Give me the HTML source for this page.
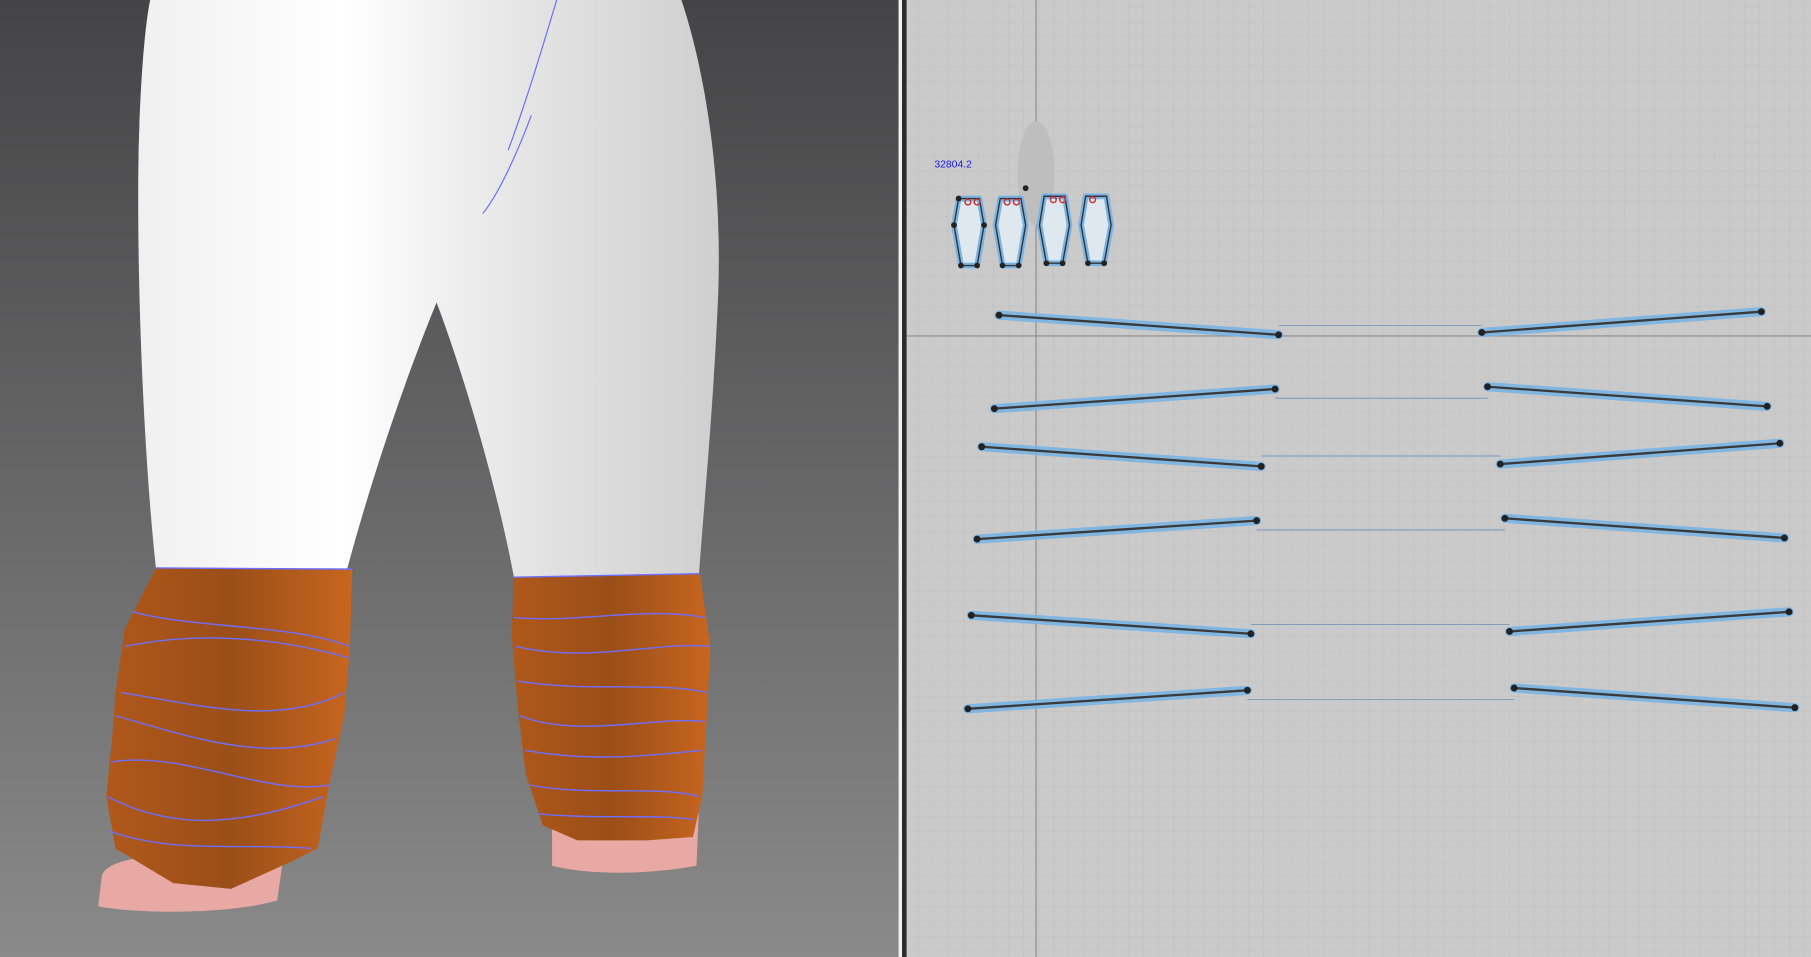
<!DOCTYPE html>
<html><head><meta charset="utf-8"><style>html,body{margin:0;padding:0;overflow:hidden;background:#888}svg{display:block}</style></head><body>
<svg width="1811" height="957" viewBox="0 0 1568 829" preserveAspectRatio="none" xmlns="http://www.w3.org/2000/svg">
<defs>
<linearGradient id="bg" x1="0" y1="0" x2="0" y2="1"><stop offset="0" stop-color="#444446"/><stop offset="0.5" stop-color="#666667"/><stop offset="1" stop-color="#8a8a8a"/></linearGradient>
<linearGradient id="pant" x1="0" y1="0" x2="1" y2="0"><stop offset="0" stop-color="#f0f0f0"/><stop offset="0.35" stop-color="#ffffff"/><stop offset="0.7" stop-color="#e2e2e2"/><stop offset="1" stop-color="#cfcfcf"/></linearGradient>
<linearGradient id="or" x1="0" y1="0" x2="1" y2="0"><stop offset="0" stop-color="#b0581a"/><stop offset="0.5" stop-color="#9a4e18"/><stop offset="1" stop-color="#c8661f"/></linearGradient>
<pattern id="g" width="13" height="13" patternUnits="userSpaceOnUse" x="2" y="5"><rect width="13" height="13" fill="#cacaca"/><path d="M0 0H13M0 0V13" stroke="#bdbdbd" stroke-width="0.7"/></pattern>
</defs>
<rect x="0" y="0" width="778" height="829" fill="url(#bg)"/>
<path d="M130,0 L590,0 C610,60 625,150 622,250 C618,350 610,430 605,500 L445,500 C430,420 400,320 378,262 C350,330 320,420 300,495 L135,492 C125,400 118,250 120,130 C122,60 126,20 130,0Z" fill="url(#pant)"/>
<path d="M482,0 C470,40 455,90 440,130 M460,100 C445,140 430,170 418,185" stroke="#6a6aff" stroke-width="1" fill="none"/>
<path d="M88,760 C90,740 160,735 245,745 L240,780 C200,792 120,792 85,785Z" fill="#e8a9a4"/>
<path d="M478,705 L605,705 L603,750 C560,758 510,758 478,750Z" fill="#e8a9a4"/>
<path d="M135,492 L305,493 L303,560 L298,620 L285,680 L275,735 L255,745 L200,770 L150,765 L100,735 L92,690 L97,640 L100,600 L108,545Z" fill="url(#or)"/>
<path d="M445,500 L606,497 L615,560 L612,620 L608,690 L600,725 L560,728 L500,728 L470,715 L455,670 L448,610 L443,550Z" fill="url(#or)"/>
<g stroke="#6e6eff" stroke-width="1.2" fill="none">
<path d="M135,492 L305,493 M115,530 C170,545 250,540 303,560 M108,560 C180,545 250,555 302,570 M105,600 C170,610 240,630 298,600 M100,620 C170,640 230,660 290,640 M96,660 C160,650 230,690 285,680 M93,690 C150,720 210,715 280,690 M95,720 C150,740 210,730 270,735"/>
<path d="M445,500 L606,497 M445,535 C500,540 560,525 610,535 M447,560 C510,575 570,555 615,560 M448,590 C510,600 570,590 612,600 M450,620 C500,640 570,620 610,625 M455,650 C510,660 560,655 608,650 M458,680 C510,690 570,680 605,690 M465,705 C520,710 570,705 600,710"/>
</g>
<rect x="778" y="0" width="3" height="829" fill="#f0f0f0"/>
<rect x="781" y="0" width="4" height="829" fill="#2a2a2a"/>
<rect x="785" y="0" width="783" height="829" fill="url(#g)"/>
<path d="M897,0V829M785,291H1568" stroke="#8c8c8c" stroke-width="1"/>
<text x="809" y="145" font-family="Liberation Sans, sans-serif" font-size="9" fill="#1a1ae0">32804.2</text>
<ellipse cx="897" cy="150" rx="16" ry="45" fill="#bebebe"/>
<g fill="#dfe7ef" stroke="#7ab4e4" stroke-width="5" stroke-linejoin="round">
<path d="M830,172 L848,172 L852,195 L846,230 L832,230 L826,195Z"/>
<path d="M866,172 L884,172 L888,195 L882,230 L868,230 L862,195Z"/>
<path d="M904,170 L922,170 L926,195 L920,228 L906,228 L900,195Z"/>
<path d="M940,170 L958,170 L962,195 L956,228 L942,228 L936,195Z"/>
</g>
<g stroke="#333" stroke-width="1.2" fill="none">
<path d="M830,172 L848,172 L852,195 L846,230 L832,230 L826,195Z M866,172 L884,172 L888,195 L882,230 L868,230 L862,195Z M904,170 L922,170 L926,195 L920,228 L906,228 L900,195Z M940,170 L958,170 L962,195 L956,228 L942,228 L936,195Z"/>
</g>
<g fill="#222"><circle cx="830" cy="172" r="2.5"/><circle cx="826" cy="195" r="2.5"/><circle cx="832" cy="230" r="2.5"/><circle cx="846" cy="230" r="2.5"/><circle cx="852" cy="195" r="2.5"/><circle cx="868" cy="230" r="2.5"/><circle cx="882" cy="230" r="2.5"/><circle cx="906" cy="228" r="2.5"/><circle cx="920" cy="228" r="2.5"/><circle cx="942" cy="228" r="2.5"/><circle cx="956" cy="228" r="2.5"/><circle cx="888" cy="163" r="2.5"/></g>
<g fill="none" stroke="#cc3333" stroke-width="1.3"><circle cx="838" cy="175" r="2.5"/><circle cx="846" cy="175" r="2.5"/><circle cx="872" cy="175" r="2.5"/><circle cx="880" cy="175" r="2.5"/><circle cx="912" cy="173" r="2.5"/><circle cx="920" cy="173" r="2.5"/><circle cx="946" cy="173" r="2.5"/></g>
<g stroke="#7ab4e4" stroke-width="8" stroke-linecap="round" opacity="0.9">
<path d="M865,273L1107,290M1283,288L1525,270M861,354L1104,337M1288,335L1530,352M850,387L1092,404M1299,402L1541,384M846,467L1088,451M1303,449L1545,466M841,533L1083,549M1307,547L1549,530M838,614L1080,598M1311,596L1554,613"/>
</g>
<g stroke="#3a3a3a" stroke-width="2">
<path d="M865,273L1107,290M1283,288L1525,270M861,354L1104,337M1288,335L1530,352M850,387L1092,404M1299,402L1541,384M846,467L1088,451M1303,449L1545,466M841,533L1083,549M1307,547L1549,530M838,614L1080,598M1311,596L1554,613"/>
</g>
<g stroke="#7a98b8" stroke-width="0.8">
<path d="M1107,282H1283M1104,345H1288M1092,395H1299M1088,459H1303M1083,541H1307M1080,606H1311"/>
</g>
<g fill="#222"><circle cx="865" cy="273" r="3"/><circle cx="1107" cy="290" r="3"/><circle cx="1283" cy="288" r="3"/><circle cx="1525" cy="270" r="3"/><circle cx="861" cy="354" r="3"/><circle cx="1104" cy="337" r="3"/><circle cx="1288" cy="335" r="3"/><circle cx="1530" cy="352" r="3"/><circle cx="850" cy="387" r="3"/><circle cx="1092" cy="404" r="3"/><circle cx="1299" cy="402" r="3"/><circle cx="1541" cy="384" r="3"/><circle cx="846" cy="467" r="3"/><circle cx="1088" cy="451" r="3"/><circle cx="1303" cy="449" r="3"/><circle cx="1545" cy="466" r="3"/><circle cx="841" cy="533" r="3"/><circle cx="1083" cy="549" r="3"/><circle cx="1307" cy="547" r="3"/><circle cx="1549" cy="530" r="3"/><circle cx="838" cy="614" r="3"/><circle cx="1080" cy="598" r="3"/><circle cx="1311" cy="596" r="3"/><circle cx="1554" cy="613" r="3"/></g>
</svg>
</body></html>
